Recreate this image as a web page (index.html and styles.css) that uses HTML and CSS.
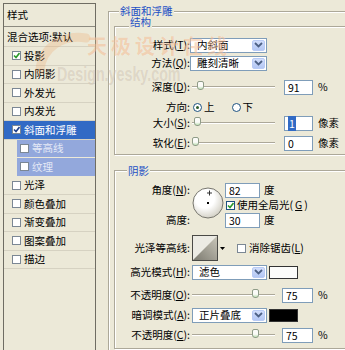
FILE: index.html
```html
<!DOCTYPE html>
<html lang="zh-CN">
<head>
    <meta charset="UTF-8">
    <title>图层样式 - 斜面和浮雕</title>
    <link rel="stylesheet" href="styles.css">
</head>
<body>
<div class="dialog">
    <!-- 左侧样式列表 -->
    <ul class="style-list">
        <li class="head">样式</li>
        <li class="blend">混合选项:默认</li>
        <li><span class="cb on"><svg width="7" height="7" viewBox="0 0 7 7"><path d="M1 3.5 L3 5.5 L6.5 1" fill="none" stroke="#2a9a2a" stroke-width="1.6"/></svg></span>投影</li>
        <li><span class="cb"></span>内阴影</li>
        <li><span class="cb"></span>外发光</li>
        <li><span class="cb"></span>内发光</li>
        <li class="active"><span class="cb on"><svg width="7" height="7" viewBox="0 0 7 7"><path d="M1 3.5 L3 5.5 L6.5 1" fill="none" stroke="#1e3f8a" stroke-width="1.6"/></svg></span>斜面和浮雕</li>
        <li class="sub"><span class="cb"></span>等高线</li>
        <li class="sub"><span class="cb"></span>纹理</li>
        <li><span class="cb"></span>光泽</li>
        <li><span class="cb"></span>颜色叠加</li>
        <li><span class="cb"></span>渐变叠加</li>
        <li><span class="cb"></span>图案叠加</li>
        <li><span class="cb"></span>描边</li>
    </ul>

    <!-- 右侧参数 -->
    <div class="options">
        <div class="group bevel">
            <div class="group-title">斜面和浮雕</div>

            <div class="group structure">
                <div class="group-title">结构</div>

                <div class="row r-style">
                    <span class="lbl">样式(<u>T</u>):</span>
                    <div class="select"><span>内斜面</span><i class="drop-btn"><svg width="9" height="6" viewBox="0 0 9 6"><path d="M1 1 L4.5 4.5 L8 1" fill="none" stroke="#4d6185" stroke-width="1.8"/></svg></i></div>
                </div>
                <div class="row r-method">
                    <span class="lbl">方法(<u>Q</u>):</span>
                    <div class="select"><span>雕刻清晰</span><i class="drop-btn"><svg width="9" height="6" viewBox="0 0 9 6"><path d="M1 1 L4.5 4.5 L8 1" fill="none" stroke="#4d6185" stroke-width="1.8"/></svg></i></div>
                </div>
                <div class="row r-depth">
                    <span class="lbl">深度(<u>D</u>):</span>
                    <div class="slider"><i class="thumb" style="left: 5px"></i></div>
                    <span class="field">91</span><span class="unit">%</span>
                </div>
                <div class="row r-dir">
                    <span class="lbl">方向:</span>
                    <span class="radio on"></span><span class="opt">上</span>
                    <span class="radio gap"></span><span class="opt">下</span>
                </div>
                <div class="row r-size">
                    <span class="lbl">大小(<u>S</u>):</span>
                    <div class="slider"><i class="thumb" style="left: 2px"></i></div>
                    <span class="field"><b class="sel">1</b></span><span class="unit">像素</span>
                </div>
                <div class="row r-soften">
                    <span class="lbl">软化(<u>E</u>):</span>
                    <div class="slider"><i class="thumb" style="left: 0px"></i></div>
                    <span class="field">0</span><span class="unit">像素</span>
                </div>
            </div>

            <div class="group shading">
                <div class="group-title">阴影</div>

                <div class="angle-block">
                    <span class="lbl a-lbl">角度(<u>N</u>):</span>
                    <svg class="dial" width="32" height="32" viewBox="0 0 32 32">
                        <defs>
                            <radialGradient id="dialFill" cx="40%" cy="35%" r="70%">
                                <stop offset="0.45" stop-color="#ffffff"/>
                                <stop offset="1" stop-color="#cfccc0"/>
                            </radialGradient>
                        </defs>
                        <circle cx="16" cy="16" r="15" fill="url(#dialFill)" stroke="#77766e"/>
                        <rect x="15" y="15" width="2" height="2" fill="#000"/>
                        <path d="M17.5 3.5 V8.5 M15 6 H20" stroke="#333" stroke-width="1"/>
                    </svg>
                    <span class="a-field"><span class="field">82</span><span class="unit">度</span></span>
                    <span class="a-check"><span class="cb on"><svg width="7" height="7" viewBox="0 0 7 7"><path d="M1 3.5 L3 5.5 L6.5 1" fill="none" stroke="#2a9a2a" stroke-width="1.6"/></svg></span>使用全局光(<u>G</u>)</span>
                    <span class="lbl h-lbl">高度:</span>
                    <span class="h-field"><span class="field">30</span><span class="unit">度</span></span>
                </div>

                <div class="row r-contour">
                    <span class="lbl">光泽等高线:</span>
                    <svg class="contour" width="26" height="26" viewBox="0 0 26 26">
                        <defs>
                            <linearGradient id="contourFill" x1="0" y1="1" x2="1" y2="0">
                                <stop offset="0" stop-color="#7c7a70"/>
                                <stop offset="1" stop-color="#c9c6b9"/>
                            </linearGradient>
                        </defs>
                        <rect x="0.5" y="0.5" width="25" height="25" fill="#ecebe4" stroke="#4a4a46"/>
                        <path d="M1 25 L25 1 V25 Z" fill="url(#contourFill)"/>
                    </svg>
                    <i class="contour-btn"><svg width="5" height="3" viewBox="0 0 5 3"><path d="M0 0 H5 L2.5 3 Z" fill="#000"/></svg></i>
                    <span class="cb aa"></span><span>消除锯齿(<u>L</u>)</span>
                </div>
                <div class="row r-hmode">
                    <span class="lbl">高光模式(<u>H</u>):</span>
                    <div class="select"><span>滤色</span><i class="drop-btn"><svg width="9" height="6" viewBox="0 0 9 6"><path d="M1 1 L4.5 4.5 L8 1" fill="none" stroke="#4d6185" stroke-width="1.8"/></svg></i></div>
                    <span class="swatch white"></span>
                </div>
                <div class="row r-hop">
                    <span class="lbl">不透明度(<u>O</u>):</span>
                    <div class="slider"><i class="thumb" style="left: 60px"></i></div>
                    <span class="field">75</span><span class="unit">%</span>
                </div>
                <div class="row r-smode">
                    <span class="lbl">暗调模式(<u>A</u>):</span>
                    <div class="select"><span>正片叠底</span><i class="drop-btn"><svg width="9" height="6" viewBox="0 0 9 6"><path d="M1 1 L4.5 4.5 L8 1" fill="none" stroke="#4d6185" stroke-width="1.8"/></svg></i></div>
                    <span class="swatch black"></span>
                </div>
                <div class="row r-sop">
                    <span class="lbl">不透明度(<u>C</u>):</span>
                    <div class="slider"><i class="thumb" style="left: 60px"></i></div>
                    <span class="field">75</span><span class="unit">%</span>
                </div>
            </div>
        </div>
    </div>

    <!-- 水印 -->
    <svg class="wm-logo" width="60" height="56" viewBox="0 0 60 56">
        <path d="M8 44 C10 22 30 8 54 12" fill="none" stroke="rgba(236,150,80,0.22)" stroke-width="9" stroke-linecap="round"/>
    </svg>
    <div class="watermark">
        <span class="wm-cn">天极设计在线</span>
        <span class="wm-en">Design.yesky.com</span>
    </div>
</div>
</body>
</html>
```

FILE: styles.css
```css
/* 对话框整体 */
body {
    margin: 0;
    background: #ece9d8;
    font-family: "Noto Sans CJK SC", "Liberation Sans", sans-serif;
    font-size: 10.5px;
    line-height: 12px;
    color: #000;
}

u {
    text-decoration: underline;
}

.dialog {
    display: flex;
    align-items: flex-start;
    height: 350px;
    overflow: hidden;
    position: relative;
}

/* 左侧样式列表 */
.style-list {
    flex: none;
    width: 91px;
    height: 400px;
    margin: 3px 0 0 3px;
    padding: 0;
    list-style: none;
    border: 1px solid #6f6d63;
    background: #ece9d8;
}

.style-list li {
    display: flex;
    align-items: center;
    height: 17.5px;
    padding-left: 8px;
    border-bottom: 1px solid #d6d2c2;
    white-space: nowrap;
}

.style-list .head {
    height: 22px;
    padding-left: 3px;
    border-bottom: 1px solid #8c8a80;
}

.style-list .blend {
    height: 19px;
    padding-left: 3px;
}

.style-list .active {
    background: #316ac5;
    color: #fff;
}

.style-list .sub {
    margin-left: 13px;
    padding-left: 3px;
    background: #93a8dc;
    color: #e4e9f6;
    border-bottom-color: #ece9d8;
}

.style-list .cb {
    margin-right: 3px;
    border-color: #7b8794;
}

/* 复选框、单选框 */
.cb {
    flex: none;
    display: inline-flex;
    align-items: center;
    justify-content: center;
    width: 7px;
    height: 7px;
    border: 1px solid #1c5180;
    background: #fff;
}

.radio {
    flex: none;
    width: 7px;
    height: 7px;
    border: 1px solid #1c5180;
    border-radius: 50%;
    background: #fff;
    display: inline-flex;
    align-items: center;
    justify-content: center;
}

.radio.on::after {
    content: "";
    width: 3px;
    height: 3px;
    border-radius: 50%;
    background: #2d5e2d;
}

.opt {
    margin-left: 2px;
}

/* 右侧分组框 */
.options {
    flex: none;
    width: 300px;
    margin-left: 12px;
}

.group {
    border: 1px solid #aca899;
    box-shadow: inset 1px 1px #fff, 1px 1px #fff;
}

.group-title {
    width: max-content;
    padding: 0 1px;
    background: #ece9d8;
    color: #1c4fc5;
}

.bevel {
    margin-top: 11px;
    height: 400px;
    padding-left: 5px;
}

.bevel > .group-title {
    margin: -7px 0 0 5px;
}

.structure {
    margin-top: 9px;
    padding-bottom: 3px;
}

.structure > .group-title {
    margin: -11px 0 0 14px;
}

.shading {
    margin-top: 15px;
    padding-bottom: 5px;
}

.shading > .group-title {
    margin: -6px 0 0 12px;
}

/* 参数行 */
.row {
    display: flex;
    align-items: center;
    height: 16px;
    white-space: nowrap;
}

.lbl {
    flex: none;
    width: 75px;
    text-align: right;
}

.shading .lbl {
    margin-right: 2px;
}

.r-style { margin-top: 9px; }
.r-method { margin-top: 2px; }
.r-depth { margin-top: 8px; }
.r-dir { margin-top: 4px; }
.r-soften { margin-top: 4px; }

.r-depth .lbl,
.r-dir .lbl,
.r-size .lbl,
.r-soften .lbl {
    margin-right: 2px;
}

.r-dir .radio {
    margin-left: 1px;
}

.r-dir .radio.gap {
    margin-left: 17px;
}

/* 下拉框 */
.select {
    flex: none;
    display: flex;
    align-items: center;
    box-sizing: border-box;
    width: 77px;
    height: 15px;
    padding: 0 1px 0 6px;
    border: 1px solid #7f9db9;
    background: #fff;
}

.shading .select {
    width: 75px;
}

.select span {
    flex: 1;
}

.drop-btn {
    display: flex;
    align-items: center;
    justify-content: center;
    box-sizing: border-box;
    width: 13px;
    height: 11px;
    border: 1px solid #b9cbf5;
    border-radius: 2px;
    background: linear-gradient(#d2defc, #b3c7f4);
}

/* 滑块 */
.slider {
    flex: none;
    position: relative;
    width: 83px;
    height: 16px;
}

.slider::before {
    content: "";
    position: absolute;
    left: 0;
    right: 0;
    top: 7px;
    height: 1px;
    background: #aca899;
    box-shadow: 0 1px #fff;
}

.thumb {
    position: absolute;
    top: 2px;
    width: 7px;
    height: 9px;
    box-sizing: border-box;
    border: 1px solid #8f9c88;
    border-radius: 2px 2px 3px 3px;
    background: linear-gradient(#fbfbf8 60%, #bfe0b5);
}

/* 输入框 */
.field {
    flex: none;
    box-sizing: border-box;
    width: 29px;
    height: 15px;
    margin-left: 9px;
    padding-left: 3px;
    border: 1px solid #7f9db9;
    background: #fff;
    line-height: 13px;
}

.sel {
    font-weight: normal;
    background: #316ac5;
    color: #fff;
    padding: 0 1px;
}

.unit {
    margin-left: 5px;
}

.r-hop .field,
.r-sop .field {
    width: 31px;
    margin-left: 7px;
}

/* 角度区 */
.angle-block {
    display: grid;
    grid-template-columns: 77px 33px auto;
    grid-template-rows: 16px 14px 16px;
    margin-top: 5px;
    white-space: nowrap;
}

.a-lbl {
    grid-column: 1;
    grid-row: 1;
    align-self: center;
}

.h-lbl {
    grid-column: 1;
    grid-row: 3;
    align-self: center;
}

.dial {
    grid-column: 2;
    grid-row: 1 / 4;
    margin-top: 5px;
}

.a-field,
.h-field {
    display: flex;
    align-items: center;
}

.a-field { grid-column: 3; grid-row: 1; }
.h-field { grid-column: 3; grid-row: 3; }

.a-field .field,
.h-field .field {
    width: 35px;
    margin-left: 0;
}

.a-field .unit,
.h-field .unit {
    margin-left: 4px;
}

.a-check {
    grid-column: 3;
    grid-row: 2;
    display: flex;
    align-items: center;
    gap: 2px;
    padding-left: 1px;
}

/* 等高线 */
.r-contour {
    height: 26px;
    margin-top: 7px;
}

.contour-btn {
    display: flex;
    align-items: center;
    justify-content: center;
    width: 8px;
    height: 26px;
}

.cb.aa {
    margin: 0 3px 0 11px;
    border-color: #7b8794;
}

/* 颜色块 */
.r-hmode { margin-top: 3px; }
.r-hop { margin-top: 7px; }
.r-smode { margin-top: 4px; }
.r-sop { margin-top: 4px; }

.swatch {
    flex: none;
    width: 27px;
    height: 11px;
    margin-left: 2px;
    border: 1px solid #333;
}

.swatch.white { background: #fcfcfa; }
.swatch.black { background: #000; }

/* 水印 */
.wm-logo {
    position: absolute;
    left: 32px;
    top: 26px;
    pointer-events: none;
}

.watermark {
    position: absolute;
    left: 57px;
    top: 34px;
    display: flex;
    flex-direction: column;
    pointer-events: none;
}

.wm-cn {
    margin-left: 30px;
    font-size: 20px;
    line-height: 24px;
    letter-spacing: 4px;
    font-weight: bold;
    color: rgba(236, 140, 70, 0.32);
    text-shadow: 0 0 1px rgba(255, 255, 255, 0.4);
}

.wm-en {
    width: max-content;
    margin-top: 6px;
    font-family: "Liberation Sans", sans-serif;
    font-size: 21px;
    line-height: 20px;
    font-weight: bold;
    color: rgba(170, 150, 120, 0.3);
    text-shadow: 0 0 1px rgba(255, 255, 255, 0.4);
    transform: scaleX(0.68);
    transform-origin: left center;
}
```
